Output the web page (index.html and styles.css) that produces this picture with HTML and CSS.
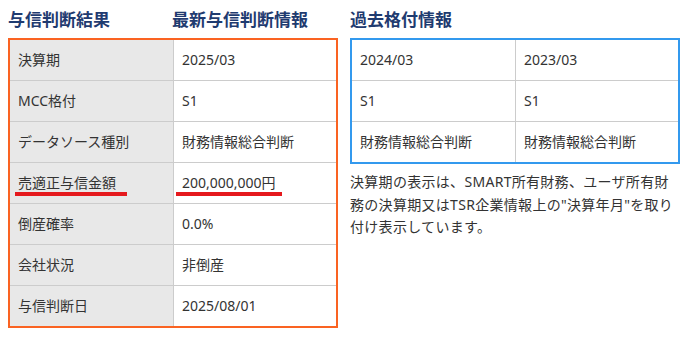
FILE: index.html
```html
<!DOCTYPE html>
<html lang="ja">
<head>
<meta charset="utf-8">
<title>与信判断結果</title>
<link rel="stylesheet" href="styles.css">
</head>
<body>
<div class="page">
  <section class="panel">
    <div class="heads">
      <h2 class="title">与信判断結果</h2>
      <h2 class="title">最新与信判断情報</h2>
    </div>
    <div class="grid grid-orange">
      <div class="cell label">決算期</div><div class="cell">2025/03</div>
      <div class="cell label">MCC格付</div><div class="cell">S1</div>
      <div class="cell label">データソース種別</div><div class="cell">財務情報総合判断</div>
      <div class="cell label"><span class="mark mark-label">売適正与信金額</span></div><div class="cell"><span class="mark mark-value">200,000,000円</span></div>
      <div class="cell label">倒産確率</div><div class="cell">0.0%</div>
      <div class="cell label">会社状況</div><div class="cell">非倒産</div>
      <div class="cell label">与信判断日</div><div class="cell">2025/08/01</div>
    </div>
  </section>
  <section class="panel">
    <h2 class="title">過去格付情報</h2>
    <div class="grid grid-blue">
      <div class="cell split">2024/03</div><div class="cell">2023/03</div>
      <div class="cell split">S1</div><div class="cell">S1</div>
      <div class="cell split">財務情報総合判断</div><div class="cell">財務情報総合判断</div>
    </div>
    <p class="note">決算期の表示は、SMART所有財務、ユーザ所有財務の決算期又はTSR企業情報上の"決算年月"を取り付け表示しています。</p>
  </section>
</div>
</body>
</html>
```
FILE: styles.css
```css
body {
  margin: 8px;
  font-family: "Noto Sans", "Noto Sans CJK JP", sans-serif;
  color: #333;
  background: #fff;
}
.page {
  display: flex;
  gap: 12px;
  align-items: flex-start;
}
.panel {
  width: 330px;
}
.heads {
  display: grid;
  grid-template-columns: 164px 1fr;
}
.title {
  margin: 0 0 6px;
  font-size: 17px;
  line-height: 24px;
  font-weight: 700;
  color: #1f3b70;
}
.grid {
  display: grid;
  grid-template-columns: 164px 1fr;
}
.grid-orange {
  border: 2px solid #fa6322;
}
.grid-blue {
  border: 2px solid #3399ee;
}
.cell {
  height: 40px;
  display: flex;
  align-items: center;
  padding: 0 8px;
  border-bottom: 1px solid #cccccc;
  font-size: 14px;
  line-height: 20px;
}
.grid .cell:nth-last-child(-n+2) {
  border-bottom: none;
}
.label {
  background: #e8e8e8;
  border-right: 1px solid #cccccc;
}
.split {
  border-right: 1px solid #cccccc;
}
.mark {
  position: relative;
  display: inline-block;
}
.mark::after {
  content: "";
  position: absolute;
  top: 19px;
  height: 4px;
  background: #e5191d;
}
.mark-label::after {
  left: -3px;
  right: -11px;
}
.mark-value::after {
  left: -6px;
  right: -6px;
}
.note {
  margin: 7px 0 0;
  font-size: 14px;
  line-height: 22.5px;
  color: #333;
  letter-spacing: 0.3px;
}
```
